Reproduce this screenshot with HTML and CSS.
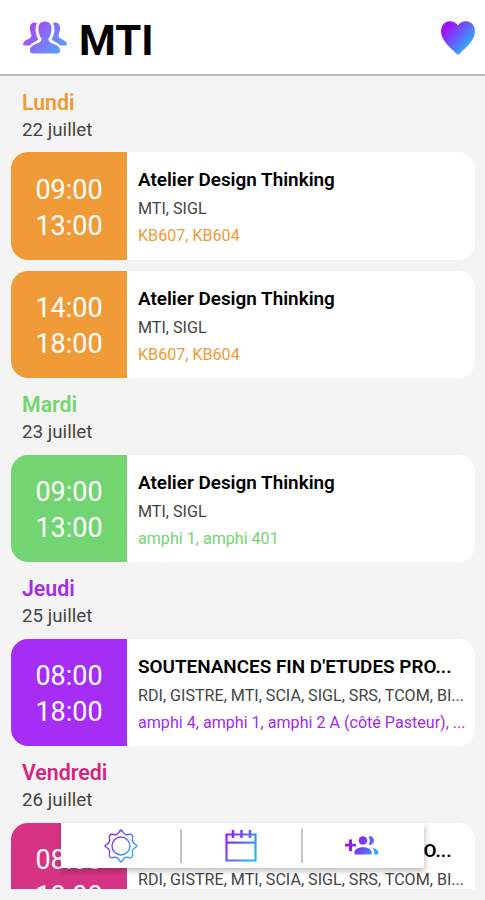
FILE: index.html
```html
<!DOCTYPE html>
<html lang="fr">
<head>
    <meta charset="UTF-8">
    <meta name="viewport" content="width=device-width, initial-scale=1.0">
    <title>MTI</title>

    <link rel="stylesheet" href="styles.css">
</head>
<body>

    <header class="header">
        <svg class="group-icon" viewBox="0 0 46 34">
            <defs>
                <linearGradient id="groupFill" gradientUnits="userSpaceOnUse" x1="4" y1="4" x2="38" y2="34">
                    <stop offset="0" stop-color="#b43cf0"/>
                    <stop offset="0.500" stop-color="#8273fa"/>
                    <stop offset="1" stop-color="#50a5fa"/>
                </linearGradient>
            </defs>
            <g fill="url(#groupFill)">
                <path d="M15 2C10 0 7.500 3.500 8 8C8.200 11 9 12.500 9.500 14.500C9.500 18.500 2 18 1 23Q1 24.500 3 24.500H8C10 21 15 21 16.300 18C13.500 14 12.500 7 15 2Z"/>
                <path d="M31 2C36 0 38.500 3.500 38 8C37.800 11 37 12.500 36.500 14.500C36.500 18.500 44 18 45 23Q45 24.500 43 24.500H38C36 21 31 21 29.700 18C32.500 14 33.500 7 31 2Z"/>
                <path d="M23 0.500C18 0.500 16 4 16.500 9C16.800 13 18 15.500 19.500 17.500C20 24 8.500 22 8 29Q7.800 32.500 11 32.500H35Q38.200 32.500 38 29C37.500 22 26 24 26.500 17.500C28 15.500 29.200 13 29.500 9C30 4 28 0.500 23 0.500Z"/>
            </g>
        </svg>
        <h1>MTI</h1>
        <svg class="heart-icon" viewBox="0 0 34 34">
            <defs>
                <linearGradient id="heartFill" x1="0.100" y1="0.150" x2="0.850" y2="0.750">
                    <stop offset="0" stop-color="#aa05fa"/>
                    <stop offset="0.500" stop-color="#695af8"/>
                    <stop offset="1" stop-color="#28b4fc"/>
                </linearGradient>
            </defs>
            <path fill="url(#heartFill)" d="M17 4.500C20 -0.500 26 -0.500 29.500 1.500C34 4 35.200 11 32.500 16.500C29.500 23 23 28.500 17 34C11 28.500 4.500 23 1.500 16.500C-1.200 11 0 4 4.500 1.500C8 -0.500 14 -0.500 17 4.500Z"/>
        </svg>
    </header>

    <main class="agenda">
        <section class="day orange">
            <div class="day-head">
                <h2>Lundi</h2>
                <p>22 juillet</p>
            </div>
            <div class="event">
                <div class="hours"><span>09:00</span><span>13:00</span></div>
                <div class="infos">
                    <h3>Atelier Design Thinking</h3>
                    <p class="groups">MTI, SIGL</p>
                    <p class="rooms">KB607, KB604</p>
                </div>
            </div>
            <div class="event">
                <div class="hours"><span>14:00</span><span>18:00</span></div>
                <div class="infos">
                    <h3>Atelier Design Thinking</h3>
                    <p class="groups">MTI, SIGL</p>
                    <p class="rooms">KB607, KB604</p>
                </div>
            </div>
        </section>

        <section class="day green">
            <div class="day-head">
                <h2>Mardi</h2>
                <p>23 juillet</p>
            </div>
            <div class="event">
                <div class="hours"><span>09:00</span><span>13:00</span></div>
                <div class="infos">
                    <h3>Atelier Design Thinking</h3>
                    <p class="groups">MTI, SIGL</p>
                    <p class="rooms">amphi 1, amphi 401</p>
                </div>
            </div>
        </section>

        <section class="day purple">
            <div class="day-head">
                <h2>Jeudi</h2>
                <p>25 juillet</p>
            </div>
            <div class="event">
                <div class="hours"><span>08:00</span><span>18:00</span></div>
                <div class="infos">
                    <h3>SOUTENANCES FIN D'ETUDES PRO...</h3>
                    <p class="groups">RDI, GISTRE, MTI, SCIA, SIGL, SRS, TCOM, BI...</p>
                    <p class="rooms">amphi 4, amphi 1, amphi 2 A (côté Pasteur), ...</p>
                </div>
            </div>
        </section>

        <section class="day pink">
            <div class="day-head">
                <h2>Vendredi</h2>
                <p>26 juillet</p>
            </div>
            <div class="event">
                <div class="hours"><span>08:00</span><span>18:00</span></div>
                <div class="infos">
                    <h3>SOUTENANCES FIN D'ETUDES PRO...</h3>
                    <p class="groups">RDI, GISTRE, MTI, SCIA, SIGL, SRS, TCOM, BI...</p>
                </div>
            </div>
        </section>
    </main>

    <nav class="toolbar">
        <a class="tool">
            <svg width="34" height="34" viewBox="0 0 34 34">
                <defs>
                    <linearGradient id="toolStroke" gradientUnits="userSpaceOnUse" x1="3" y1="6" x2="31" y2="27">
                        <stop offset="0" stop-color="#a014fa"/>
                        <stop offset="1" stop-color="#1ebefa"/>
                    </linearGradient>
                </defs>
                <g fill="none" stroke="url(#toolStroke)" stroke-width="1.400" stroke-linejoin="round">
                    <circle cx="17" cy="17" r="9"/>
                    <path d="M17 1C19 2 19 5 21.500 5.500C24 6.500 26 4 28 6C30 8 27.500 10 28.500 12.500C29 15 32 15 33 17C32 19 29 19 28.500 21.500C27.500 24 30 26 28 28C26 30 24 27.500 21.500 28.500C19 29 19 32 17 33C15 32 15 29 12.500 28.500C10 27.500 8 30 6 28C4 26 6.500 24 5.500 21.500C5 19 2 19 1 17C2 15 5 15 5.500 12.500C6.500 10 4 8 6 6C8 4 10 6.500 12.500 5.500C15 5 15 2 17 1Z"/>
                </g>
            </svg>
        </a>
        <a class="tool">
            <svg width="34" height="34" viewBox="0 0 34 34">
                <g fill="none" stroke="url(#toolStroke)" stroke-width="2.200">
                    <path d="M2.500 5.500H31.500V31.500H2.500ZM2.500 13.700H31.500"/>
                    <path d="M9 1V9M17.500 1V9M26 1V9" stroke-width="2.600"/>
                </g>
            </svg>
        </a>
        <a class="tool">
            <svg width="36" height="24" viewBox="0 0 36 24">
                <defs>
                    <linearGradient id="peopleFill" gradientUnits="userSpaceOnUse" x1="5" y1="6" x2="33" y2="22">
                        <stop offset="0" stop-color="#a505f0"/>
                        <stop offset="0.500" stop-color="#6e4bf0"/>
                        <stop offset="1" stop-color="#1ebefa"/>
                    </linearGradient>
                </defs>
                <g fill="url(#peopleFill)">
                    <path d="M5 5.500H8V9.700H12V12.500H8V17H5V12.500H1V9.700H5Z"/>
                    <circle cx="19" cy="6.500" r="4.300"/>
                    <path d="M10.500 20.500V18.500C10.500 15 15 13.300 19 13.300S27.700 15 27.700 18.500V20.500Z"/>
                    <path d="M24.500 2.500C27.500 1.500 30 3.500 30 6.500S27.500 11.500 24.500 10.500C26.300 8 26.300 5 24.500 2.500Z"/>
                    <path d="M28.300 13.800C31.500 14.500 34.300 16 34.300 18.500V20.500H30.300V18.500C30.300 16.500 29.500 15 28.300 13.800Z"/>
                </g>
            </svg>
        </a>
    </nav>

</body>
</html>
```
FILE: styles.css
```css
*
{
    box-sizing: border-box;
}
body{
    margin: 0;
    height: 900px;
    overflow: hidden;
    background: #f4f4f4;
    font-family: Roboto, sans-serif;
    color: #000;
}
h1, h2, h3, p
{
    margin: 0;
}
.header
{
    height: 76px;
    display: flex;
    align-items: center;
    padding: 0 10px 0 22px;
    background: white;
    border-bottom: 2px solid #bebebe;
}
.header h1
{
    margin: 7px auto 0 11px;
    font-size: 42px;
    line-height: 48px;
    font-weight: bold;
}
.group-icon
{
    width: 46px;
    height: 34px;
    margin-top: 2px;
}
.heart-icon
{
    width: 34px;
    height: 34px;
    margin-top: 2px;
}

/* list of days, cut just above the bottom of the screen */
.agenda
{
    height: 813px;
    overflow: hidden;
    padding: 0 10px 0 11px;
}
.day-head
{
    height: 76.5px;
    padding: 14px 11px 0 11px;
}
.day:first-child .day-head
{
    height: 76px;
}
.day-head h2
{
    font-size: 21.3px;
    line-height: 26px;
    font-weight: 600;
}
.day-head p
{
    font-size: 18.8px;
    line-height: 28px;
    color: #444;
}
.event
{
    display: flex;
    height: 107.5px;
    border-radius: 17px;
    overflow: hidden;
    background: white;
}
.event + .event
{
    margin-top: 11px;
}
.hours
{
    width: 116px;
    flex-shrink: 0;
    display: flex;
    flex-direction: column;
    align-items: center;
    padding-top: 19.5px;
    font-size: 27px;
    line-height: 36px;
    color: white;
}
.infos
{
    padding: 14px 0 0 11px;
    white-space: nowrap;
}
.infos h3
{
    margin-bottom: 1px;
    font-size: 18.9px;
    line-height: 27px;
    font-weight: 600;
}
.groups
{
    font-size: 16.12px;
    line-height: 29px;
    color: #444;
}
.rooms
{
    font-size: 16.1px;
    line-height: 26px;
}

.orange h2, .orange .rooms
{
    color: #ef9a34;
}
.orange .hours
{
    background: #f09b37;
}
.green h2, .green .rooms
{
    color: #72d572;
}
.green .hours
{
    background: #72d572;
}
.purple h2, .purple .rooms
{
    color: #a22bee;
}
.purple .hours
{
    background: #a52df5;
}
.pink h2
{
    color: #d2267f;
}
.pink .hours
{
    background: #d63384;
}

/* floating bar over the list */
.toolbar
{
    position: absolute;
    left: 61px;
    top: 823px;
    width: 363px;
    height: 45px;
    display: flex;
    align-items: center;
    background: white;
    box-shadow: 1px 3px 6px rgba(0, 0, 0, 0.25);
}
.tool
{
    width: 119px;
    height: 34px;
    display: flex;
    align-items: center;
    justify-content: center;
}
.tool + .tool
{
    width: 121px;
    padding-right: 1px;
    border-left: 2px solid #c4c4c4;
}
```
